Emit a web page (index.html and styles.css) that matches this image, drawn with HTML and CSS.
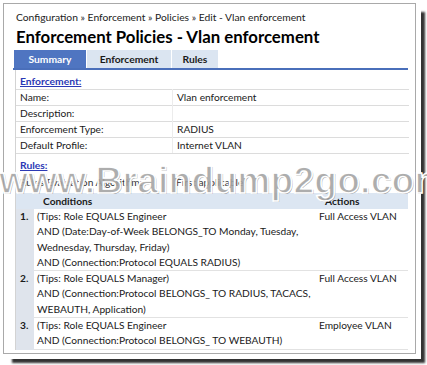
FILE: index.html
```html
<!DOCTYPE html>
<html>
<head>
<meta charset="utf-8">
<link rel="stylesheet" href="styles.css">
</head>
<body>
<div class="frame">
  <div class="crumb">Configuration » Enforcement » Policies » Edit - Vlan enforcement</div>
  <h1 class="title">Enforcement Policies - Vlan enforcement</h1>
  <div class="tabs">
    <span class="tab active t1">Summary</span>
    <span class="tab t2">Enforcement</span>
    <span class="tab t3">Rules</span>
  </div>
  <div class="panel">
    <div class="sect"><span class="link">Enforcement:</span></div>
    <table class="kv">
      <tr><td class="k">Name:</td><td class="v">Vlan enforcement</td></tr>
      <tr><td class="k">Description:</td><td class="v"></td></tr>
      <tr><td class="k">Enforcement Type:</td><td class="v">RADIUS</td></tr>
      <tr><td class="k">Default Profile:</td><td class="v">Internet VLAN</td></tr>
    </table>
    <div class="sect rules-sect"><span class="link">Rules:</span></div>
    <div class="alg"><span class="k">Rules Evaluation Algorithm:</span><span class="v">First applicable</span></div>
    <table class="rules">
      <tr class="head"><th class="num"></th><th class="cond">Conditions</th><th class="act">Actions</th></tr>
      <tr>
        <td class="num">1.</td>
        <td class="cond">(Tips: Role EQUALS Engineer<br>AND (Date:Day-of-Week BELONGS_TO Monday, Tuesday,<br>Wednesday, Thursday, Friday)<br>AND (Connection:Protocol EQUALS RADIUS)</td>
        <td class="act">Full Access VLAN</td>
      </tr>
      <tr>
        <td class="num">2.</td>
        <td class="cond">(Tips: Role EQUALS Manager)<br>AND (Connection:Protocol BELONGS_ TO RADIUS, TACACS,<br>WEBAUTH, Application)</td>
        <td class="act">Full Access VLAN</td>
      </tr>
      <tr>
        <td class="num">3.</td>
        <td class="cond">(Tips: Role EQUALS Engineer<br>AND (Connection:Protocol BELONGS_ TO WEBAUTH)</td>
        <td class="act">Employee VLAN</td>
      </tr>
    </table>
  </div>
  <div class="watermark">www.Braindump2go.com</div>
</div>
</body>
</html>
```

FILE: styles.css
```css
html, body {
  margin: 0;
  padding: 0;
  background: #fff;
}
body {
  width: 427px;
  height: 365px;
  overflow: hidden;
  font-family: Lato, "Open Sans", sans-serif;
  color: #1a1a1a;
}
.frame {
  position: relative;
  margin: 3px 0 0 3px;
  width: 411px;
  height: 349px;
  border: 1px solid #a9a9a9;
  box-shadow: 5px 5px 0 0 #fff, 9px 9px 2px 0 #333;
  background: #fff;
}
.crumb {
  padding: 6px 0 0 12px;
  font-size: 10.3px;
  line-height: 14px;
  color: #222;
}
.title {
  margin: 3px 0 0 12px;
  font-size: 16.8px;
  line-height: 20px;
  font-weight: bold;
  color: #000;
}
.tabs {
  display: flex;
  margin: 3px 0 0 9px;
  width: 395px;
  border-bottom: 2px solid #4a6fba;
}
.tab {
  display: block;
  height: 18px;
  line-height: 19px;
  font-size: 10.3px;
  font-weight: bold;
  text-align: center;
  background: #dbe5f1;
  border-right: 1px solid #fff;
  color: #1a1a1a;
}
.t1 { width: 72px; margin-left: 1px; }
.t2 { width: 84px; }
.t3 { width: 46px; }
.tab.active {
  background: #4f75c1;
  color: #fff;
}
.panel {
  margin-left: 11px;
  width: 393px;
  border-left: 1px solid #d3d3d3;
  font-size: 10px;
}
.sect {
  padding: 4px 0 0 4px;
  height: 14px;
  line-height: 14px;
  margin-bottom: 1px;
}
.link {
  color: #2b39b5;
  font-weight: bold;
  text-decoration: underline;
  font-size: 10.3px;
}
.kv {
  width: 100%;
  border-collapse: collapse;
}
.kv td {
  height: 15px;
  padding: 0 4px;
  line-height: 15px;
  border-top: 1px solid #dcdcdc;
  font-size: 10.2px;
}
.kv tr:last-child td {
  border-bottom: 1px solid #dcdcdc;
}
.kv .k {
  width: 148px;
  border-right: 1px solid #ececec;
}
.rules-sect {
  margin-bottom: 0;
}
.alg {
  display: flex;
  padding: 3px 0 4px 4px;
  height: 14px;
  line-height: 14px;
  color: #333;
  font-size: 10.2px;
}
.alg .k { width: 156px; }
.rules {
  width: 392px;
  border-collapse: collapse;
  font-size: 10.2px;
}
.rules th {
  background: #dce6f2;
  height: 16px;
  line-height: 16px;
  font-weight: bold;
  text-align: left;
  padding: 0;
}
.rules th.cond { padding-left: 9px; }
.rules th.act { padding-left: 10px; }
.rules td {
  vertical-align: top;
  padding: 0;
  line-height: 15.3px;
  border-bottom: 1px solid #e2e2e2;
}
.rules td.num {
  width: 14px;
  padding-left: 4px;
  background: #dfe4ec;
  font-weight: bold;
  border-bottom: 1px solid #dfe4ec;
}
.rules th.num { width: 18px; }
.rules td.cond { padding-left: 3px; width: 278px; }
.rules td.act { padding-left: 4px; }
.watermark {
  position: absolute;
  left: -5px;
  top: 156px;
  font-family: "Liberation Sans", Arial, sans-serif;
  font-weight: bold;
  font-size: 37px;
  letter-spacing: 0.3px;
  white-space: nowrap;
  color: rgba(175, 175, 175, 0.75);
  -webkit-text-stroke: 1.5px #fff;
  text-shadow: 1px 1px 0 rgba(90, 90, 90, 0.55);
  pointer-events: none;
}
```
